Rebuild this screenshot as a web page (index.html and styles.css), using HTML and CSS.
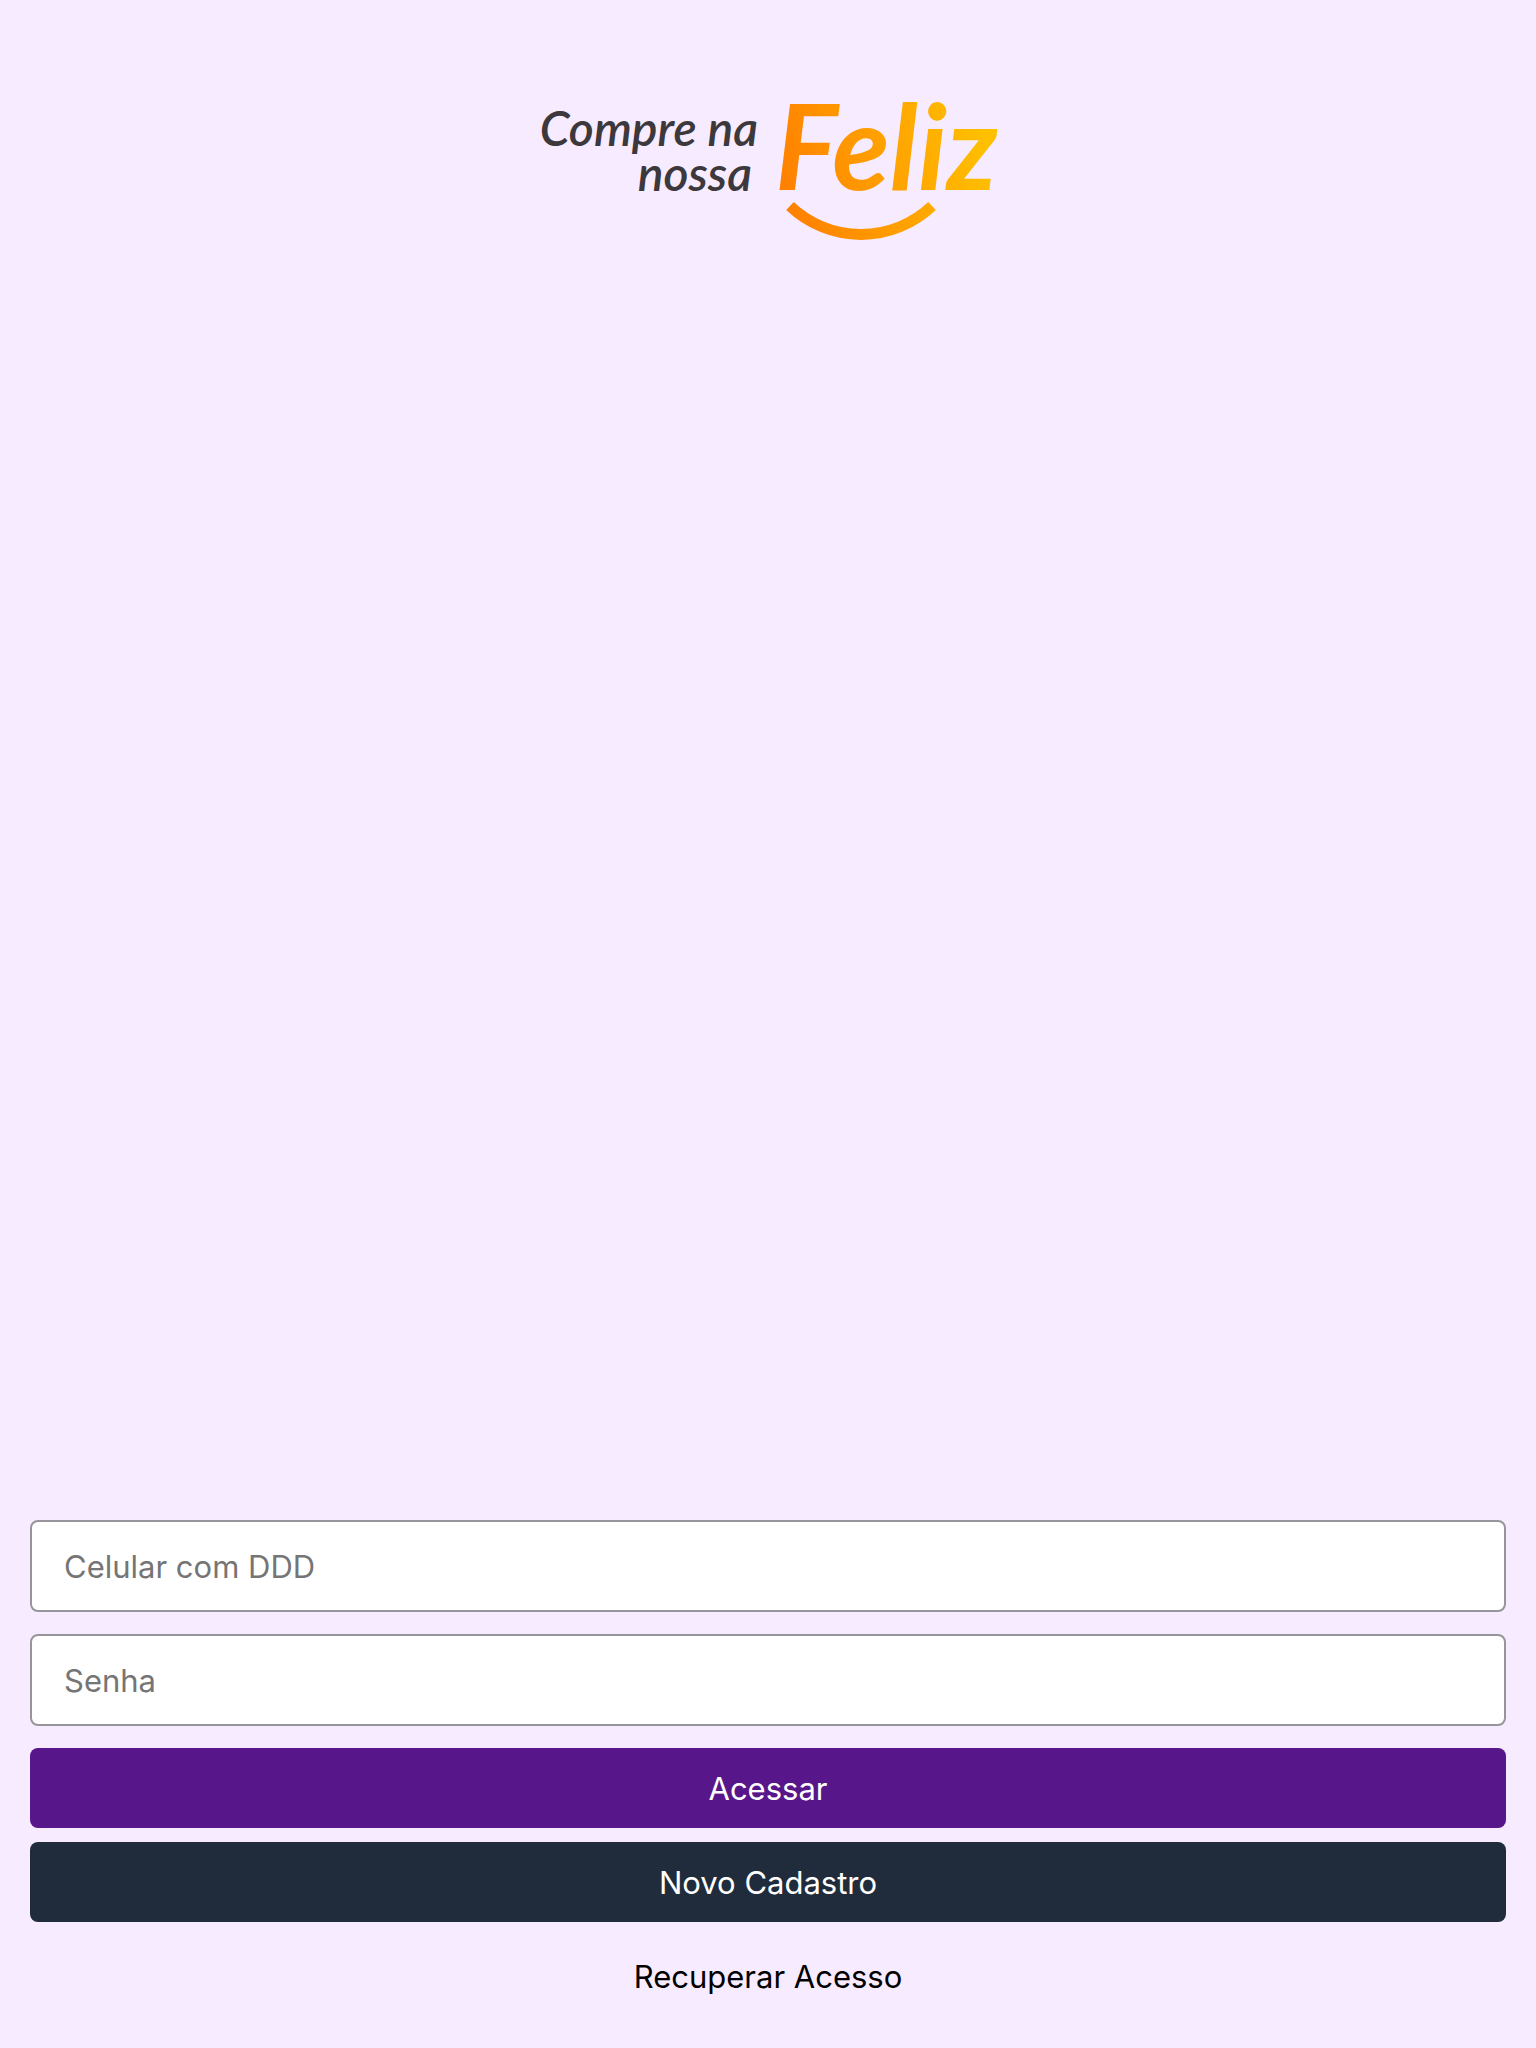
FILE: index.html
```
<!DOCTYPE html>
<html lang="pt-BR">
<head>
    <meta charset="UTF-8">
    <meta name="viewport" content="width=device-width, initial-scale=1.0">
    <title>Compre na nossa Feliz</title>
    <link rel="stylesheet" href="styles.css">
</head>
<body>
    <header class="header">
        <svg class="logo" viewBox="0 0 460 146" role="img" aria-label="Compre na nossa Feliz">
            <defs>
                <linearGradient id="sun" gradientUnits="userSpaceOnUse" x1="240" y1="110" x2="450" y2="50">
                    <stop offset="0" stop-color="#ff7d00"/>
                    <stop offset="1" stop-color="#ffc000"/>
                </linearGradient>
            </defs>
            <text class="logo-small" x="220" y="48" text-anchor="end">Compre na</text>
            <text class="logo-small" x="214" y="93" text-anchor="end">nossa</text>
            <text class="logo-big" x="237" y="92" fill="url(#sun)">Feliz</text>
            <path d="M252 108 A103 103 0 0 0 394 108" fill="none" stroke="url(#sun)" stroke-width="11"/>
        </svg>
    </header>
    <form class="login-form">
        <input class="field" type="tel" name="celular" placeholder="Celular com DDD" aria-label="Celular com DDD">
        <input class="field" type="password" name="senha" placeholder="Senha" aria-label="Senha">
        <button class="btn primary" type="submit">Acessar</button>
        <button class="btn dark" type="button">Novo Cadastro</button>
        <a class="btn link" href="#">Recuperar Acesso</a>
    </form>
</body>
</html>
```
FILE: styles.css
```
* {
    box-sizing: border-box;
}
body {
    font-family: Inter, "Liberation Sans", sans-serif;
    font-size: 31px;
    margin: 0;
    background: #f7ebff;
    color: #000;
    display: flex;
    flex-direction: column;
    justify-content: space-between;
    min-height: 100vh;
}
.header {
    padding: 98px 30px 0;
    text-align: center;
}
.logo {
    width: 460px;
    max-width: 100%;
    overflow: visible;
}
.logo-small {
    font-family: Lato, sans-serif;
    font-size: 48px;
    font-style: italic;
    font-weight: 600;
    fill: #3c383b;
}
.logo-big {
    font-family: Lato, sans-serif;
    font-size: 118px;
    font-style: italic;
    font-weight: 700;
}
.login-form {
    display: flex;
    flex-direction: column;
    padding: 0 30px 32px;
}
.field {
    width: 100%;
    height: 92px;
    margin: 0 0 22px;
    padding: 0 32px;
    border: 2px solid #98949c;
    border-radius: 8px;
    background: white;
    color: #000;
    font: inherit;
}
.field::placeholder {
    color: #757575;
    opacity: 1;
}
.btn {
    display: flex;
    align-items: center;
    justify-content: center;
    width: 100%;
    height: 80px;
    margin: 0 0 14px;
    padding: 0;
    border: none;
    border-radius: 8px;
    font: inherit;
    text-decoration: none;
    cursor: pointer;
}
.btn.primary {
    background: #58168b;
    color: white;
}
.btn.dark {
    background: #202c3b;
    color: white;
}
.btn.link {
    margin: 0;
    color: #000;
}
```
